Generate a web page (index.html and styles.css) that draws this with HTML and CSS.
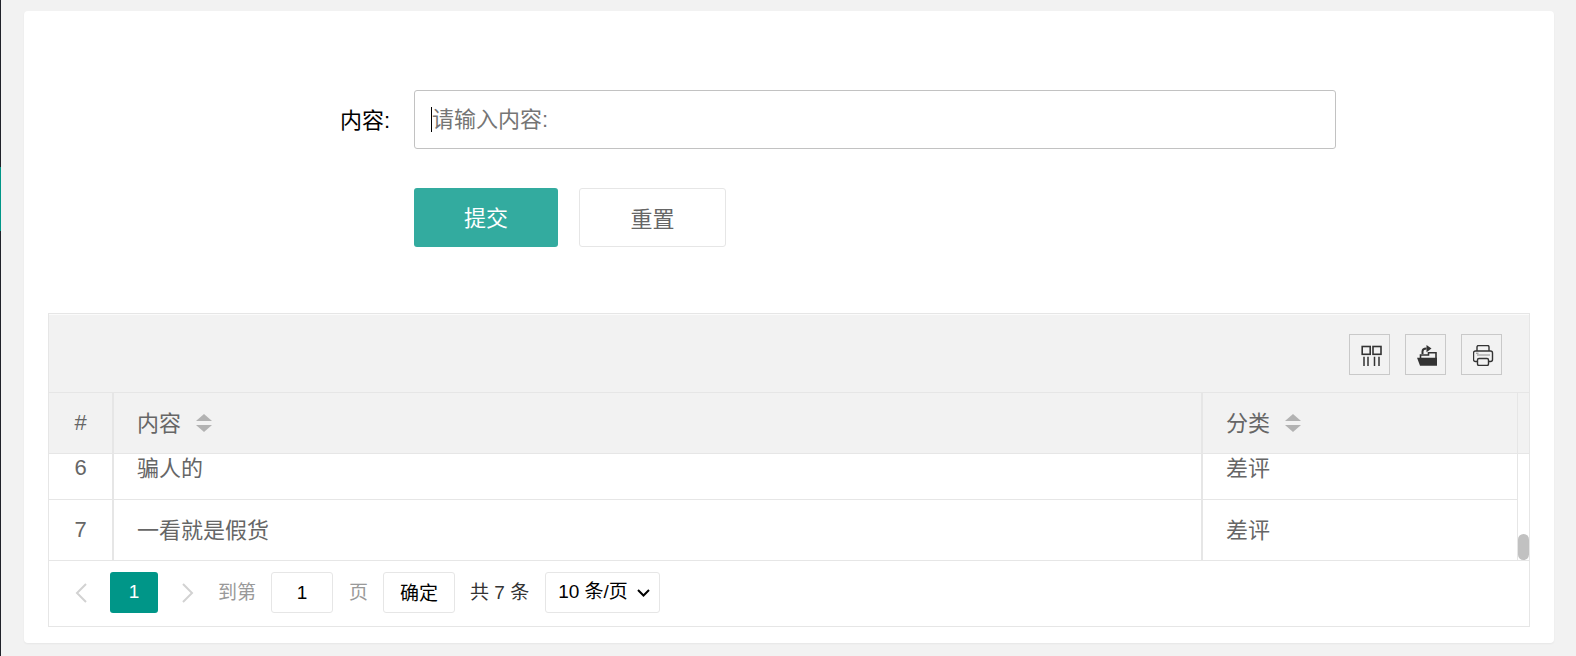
FILE: index.html
```html
<!DOCTYPE html>
<html lang="zh-CN">
<head>
    <meta charset="UTF-8">
    <title>评论管理</title>
    <link rel="stylesheet" href="styles.css">
</head>
<body>
    <div class="side-strip"><span class="side-active"></span></div>
    <div class="main">
        <div class="card">
            <form class="comment-form">
                <div class="form-row">
                    <label class="form-label" for="content">内容:</label>
                    <div class="input-wrap">
                        <input class="form-input" type="text" id="content" placeholder="请输入内容:">
                        <span class="caret"></span>
                    </div>
                </div>
                <div class="form-actions">
                    <button class="btn btn-primary" type="button">提交</button>
                    <button class="btn btn-plain" type="reset">重置</button>
                </div>
            </form>

            <div class="table-box">
                <div class="toolbar">
                    <span class="tool-btn">
                        <svg width="21" height="21" viewBox="0 0 21 21" fill="none" stroke="#333" stroke-width="1.6">
                            <rect x="1.2" y="1.5" width="8" height="7.8"/>
                            <rect x="12" y="1.5" width="8" height="7.8"/>
                            <path d="M3 11.700V21M7 11.700V21M13.500 11.700V21M18 11.700V21" stroke-width="1.500"/>
                        </svg>
                    </span>
                    <span class="tool-btn">
                        <svg width="21" height="21" viewBox="0 0 21 21">
                            <path d="M5.500 9V6.500C5.500 4.500 7 3.500 9.500 3.500" fill="none" stroke="#333" stroke-width="2"/>
                            <path d="M9.500 0l5 3.500-5 3.800z" fill="#333"/>
                            <path d="M3.500 13V10h8V7.700h7.500V14" fill="none" stroke="#333" stroke-width="1.600"/>
                            <path d="M0 12.800H20V20.800H3z" fill="#333"/>
                        </svg>
                    </span>
                    <span class="tool-btn">
                        <svg width="21" height="21" viewBox="0 0 21 21" fill="none" stroke="#333" stroke-width="1.4">
                            <path d="M4 6V2a1.500 1.500 0 0 1 1.500-1.500h9A1.500 1.500 0 0 1 16 2v4"/>
                            <path d="M4 16.500H2.500a2 2 0 0 1-2-2V8a2 2 0 0 1 2-2h15a2 2 0 0 1 2 2v6.500a2 2 0 0 1-2 2H16"/>
                            <rect x="4.500" y="13.500" width="11" height="7" rx="1.500" fill="#f2f2f2"/>
                            <path d="M4 10h13" stroke="#aaa"/>
                            <path d="M3 8.300h2.500" stroke="#aaa"/>
                        </svg>
                    </span>
                </div>

                <div class="grid-head">
                    <table class="grid">
                        <colgroup><col class="col-no"><col class="col-text"><col></colgroup>
                        <tr>
                            <th class="cell-no">#</th>
                            <th><span class="th-inner">内容 <i class="sort"></i></span></th>
                            <th><span class="th-inner">分类 <i class="sort"></i></span></th>
                        </tr>
                    </table>
                    <div class="gutter"></div>
                </div>

                <div class="grid-body">
                    <div class="rows">
                        <table class="grid">
                            <colgroup><col class="col-no"><col class="col-text"><col></colgroup>
                            <tr>
                                <td class="cell-no">6</td>
                                <td>骗人的</td>
                                <td>差评</td>
                            </tr>
                            <tr>
                                <td class="cell-no">7</td>
                                <td>一看就是假货</td>
                                <td>差评</td>
                            </tr>
                        </table>
                    </div>
                    <div class="gutter"><span class="thumb"></span></div>
                </div>

                <div class="pager">
                    <svg class="pager-arrow" width="12" height="20" viewBox="0 0 12 20" fill="none" stroke="#d2d2d2" stroke-width="2"><path d="M11 1L2 10l9 9"/></svg>
                    <span class="page-current">1</span>
                    <svg class="pager-arrow next" width="12" height="20" viewBox="0 0 12 20" fill="none" stroke="#d2d2d2" stroke-width="2"><path d="M1 1l9 9-9 9"/></svg>
                    <span class="pager-muted goto">到第</span>
                    <input class="page-input" type="text" value="1">
                    <span class="pager-muted page-word">页</span>
                    <button class="page-ok" type="button">确定</button>
                    <span class="page-total">共 7 条</span>
                    <select class="page-size">
                        <option>10 条/页</option>
                        <option>20 条/页</option>
                    </select>
                </div>
            </div>
        </div>
    </div>
</body>
</html>
```

FILE: styles.css
```css
* {
    box-sizing: border-box;
}

html, body {
    height: 100%;
}

body {
    margin: 0;
    display: flex;
    background-color: #f2f2f2;
    font-family: "Liberation Sans", "Noto Sans CJK SC", sans-serif;
    color: #666;
    overflow: hidden;
}

.side-strip {
    position: relative;
    width: 1px;
    background-color: #20222a;
}

.side-active {
    position: absolute;
    left: 0;
    top: 167px;
    width: 1px;
    height: 64px;
    background-color: #009688;
}

.main {
    flex: 1;
    padding: 11px 22px 13px 23px;
}

.card {
    height: 632px;
    padding: 79px 24px 16px;
    background-color: #fff;
    border-radius: 4px;
    box-shadow: 0 1px 2px rgba(0, 0, 0, 0.05);
}

.form-row {
    display: flex;
    align-items: center;
    padding-right: 194px;
}

.form-label {
    width: 342px;
    padding-bottom: 4px;
    text-align: right;
    font-size: 22px;
    color: #000;
}

.input-wrap {
    position: relative;
    flex: 1;
    margin-left: 24px;
}

.form-input {
    display: block;
    width: 100%;
    height: 59px;
    padding: 0 17px;
    border: 1px solid #c2c2c2;
    border-radius: 3px;
    font-family: inherit;
    font-size: 22px;
    outline: none;
}

.caret {
    position: absolute;
    left: 17px;
    top: 17px;
    width: 1px;
    height: 25px;
    background-color: #000;
}

.form-actions {
    display: flex;
    gap: 21px;
    margin-top: 39px;
    margin-left: 366px;
}

.btn {
    height: 59px;
    border-radius: 3px;
    font-family: inherit;
    font-size: 22px;
}

.btn-primary {
    width: 144px;
    padding-bottom: 5px;
    border: none;
    background-color: #33ab9f;
    color: #fff;
}

.btn-plain {
    width: 147px;
    padding-bottom: 3px;
    border: 1px solid #e6e6e6;
    background-color: #fff;
    color: #666;
}

.table-box {
    margin-top: 66px;
    border: 1px solid #e6e6e6;
}

.toolbar {
    display: flex;
    justify-content: flex-end;
    gap: 15px;
    height: 79px;
    padding: 19px 27px 0 0;
    border-top: 1px solid #fbfbfb;
    border-bottom: 1px solid #e6e6e6;
    background-color: #f2f2f2;
}

.tool-btn {
    display: flex;
    align-items: center;
    justify-content: center;
    width: 41px;
    height: 41px;
    padding: 2px 0 0 4px;
    border: 1px solid #c9c9c9;
}

.grid-head, .grid-body {
    display: flex;
}

.grid-head {
    background-color: #f2f2f2;
    border-bottom: 1px solid #e6e6e6;
}

.grid {
    width: 1469px;
    table-layout: fixed;
    border-collapse: collapse;
    font-size: 22px;
}

.col-no {
    width: 64px;
}

.col-text {
    width: 1089px;
}

.grid th, .grid td {
    height: 60px;
    padding: 0 24px 4px 23px;
    border-right: 2px solid #e6e6e6;
    text-align: left;
    font-weight: normal;
}

.grid td {
    height: 61px;
    border-bottom: 1px solid #e6e6e6;
}

.grid th:last-child, .grid td:last-child {
    border-right-width: 1px;
}

.grid .cell-no {
    padding: 0;
    text-align: center;
}

.th-inner {
    display: inline-flex;
    align-items: center;
    gap: 15px;
}

.sort {
    position: relative;
    display: inline-block;
    width: 16px;
    height: 18px;
    margin-top: 3px;
}

.sort::before, .sort::after {
    content: "";
    position: absolute;
    left: 0;
    border-left: 8px solid transparent;
    border-right: 8px solid transparent;
}

.sort::before {
    top: 0;
    border-bottom: 7px solid #b2b2b2;
}

.sort::after {
    bottom: 0;
    border-top: 7px solid #b2b2b2;
}

.gutter {
    display: flex;
    flex: 1;
    align-items: flex-end;
}

.grid-body {
    height: 106px;
}

.rows {
    height: 106px;
    overflow: hidden;
}

.rows .grid {
    margin-top: -16px;
}

.thumb {
    width: 100%;
    height: 26px;
    border-radius: 6px;
    background-color: #c1c1c1;
}

.pager {
    display: flex;
    align-items: center;
    height: 66px;
    padding: 0 0 2px 26px;
    border-top: 1px solid #e6e6e6;
    font-size: 19px;
}

.pager-arrow.next {
    margin-left: 24px;
}

.page-current {
    width: 48px;
    height: 41px;
    margin-left: 23px;
    border-radius: 3px;
    background-color: #009688;
    color: #fff;
    line-height: 40px;
    text-align: center;
}

.pager-muted {
    padding-bottom: 4px;
    color: #999;
}

.goto {
    margin-left: 24px;
}

.page-input {
    width: 62px;
    height: 41px;
    margin-left: 15px;
    border: 1px solid #e6e6e6;
    border-radius: 3px;
    font-family: inherit;
    font-size: 19px;
    text-align: center;
    outline: none;
}

.page-word {
    margin-left: 16px;
}

.page-ok {
    width: 72px;
    height: 41px;
    margin-left: 15px;
    padding-bottom: 4px;
    border: 1px solid #e6e6e6;
    border-radius: 3px;
    background-color: #fff;
    color: #000;
    font-family: inherit;
    font-size: 19px;
}

.page-total {
    margin-left: 15px;
    padding-bottom: 4px;
    color: #333;
}

.page-size {
    width: 115px;
    height: 41px;
    margin-left: 16px;
    padding: 0 0 2px 12px;
    border: 1px solid #e6e6e6;
    border-radius: 3px;
    appearance: none;
    background: #fff url("data:image/svg+xml,%3Csvg xmlns='http://www.w3.org/2000/svg' width='13' height='8' fill='none' stroke='%23000' stroke-width='2'%3E%3Cpath d='M1 1l5.500 5.500L12 1'/%3E%3C/svg%3E") no-repeat right 9px center;
    color: #000;
    font-family: inherit;
    font-size: 19px;
}
```
